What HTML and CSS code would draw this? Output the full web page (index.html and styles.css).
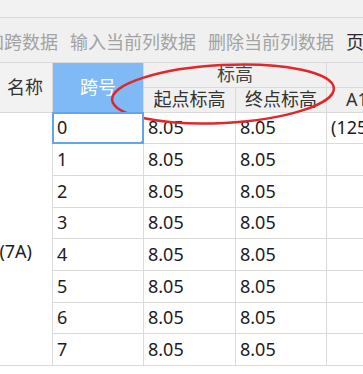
FILE: index.html
```html
<!DOCTYPE html>
<html lang="zh-CN">
<head>
<meta charset="utf-8">
<link rel="stylesheet" href="styles.css">
</head>
<body>
<div class="page">
  <div class="topbar"></div>
  <div class="toolbar">
    <span class="tool first">添加跨数据</span>
    <span class="tool">输入当前列数据</span>
    <span class="tool">删除当前列数据</span>
    <span class="tool dark">页</span>
  </div>
  <div class="grid">
    <div class="hd name">名称</div>
    <div class="hd span-no">跨号</div>
    <div class="hd group">标高</div>
    <div class="hd group-a"></div>
    <div class="hd sub">起点标高</div>
    <div class="hd sub">终点标高</div>
    <div class="hd sub a">A1类</div>

    <div class="namecell">主桥(7A)</div>

    <div class="c sel">0</div><div class="c">8.05</div><div class="c">8.05</div><div class="c">(125.0,30.0)</div>
    <div class="c">1</div><div class="c">8.05</div><div class="c">8.05</div><div class="c"></div>
    <div class="c">2</div><div class="c">8.05</div><div class="c">8.05</div><div class="c"></div>
    <div class="c">3</div><div class="c">8.05</div><div class="c">8.05</div><div class="c"></div>
    <div class="c">4</div><div class="c">8.05</div><div class="c">8.05</div><div class="c"></div>
    <div class="c">5</div><div class="c">8.05</div><div class="c">8.05</div><div class="c"></div>
    <div class="c">6</div><div class="c">8.05</div><div class="c">8.05</div><div class="c"></div>
    <div class="c">7</div><div class="c">8.05</div><div class="c">8.05</div><div class="c"></div>
  </div>
  <svg class="mark" width="363" height="374" viewBox="0 0 363 374">
    <ellipse cx="223" cy="94" rx="111" ry="29" transform="rotate(-3 223 94)" fill="none" stroke="#e2262c" stroke-width="2.5"/>
  </svg>
</div>
</body>
</html>
```

FILE: styles.css
```css
html, body {
  margin: 0;
  padding: 0;
  background: #ffffff;
}
.page {
  position: relative;
  width: 363px;
  height: 374px;
  overflow: hidden;
  font-family: "Noto Sans", "Noto Sans CJK SC", sans-serif;
  font-size: 18px;
  line-height: 1.2;
  color: #1c1c1c;
}
.topbar {
  height: 17px;
  background: #f2f2f2;
  border-bottom: 1px solid #d3d8de;
}
.toolbar {
  height: 44px;
  box-sizing: border-box;
  padding-top: 5px;
  background: #f0f0f0;
  display: flex;
  align-items: center;
  gap: 12px;
  white-space: nowrap;
  color: #a3a3a3;
}
.tool.first {
  margin-left: -32px;
}
.tool.dark {
  color: #2a2a2a;
}
.grid {
  display: grid;
  grid-template-columns: 52px 90px 91px 90px 1fr;
  grid-template-rows: 24px 24px 30px 31px 31px 30px 31px 31px 30px 31px;
  gap: 1px;
  padding: 1px 0;
  background: #dadada;
  white-space: nowrap;
}
.hd {
  background: #f0f0f0;
  display: flex;
  align-items: center;
  justify-content: center;
  color: #333;
  overflow: hidden;
}
.hd.name {
  grid-row: 1 / 3;
  justify-content: flex-end;
  padding-right: 9px;
  background: #f2f2f2;
}
.hd.span-no {
  grid-row: 1 / 3;
  background: #7fb9f6;
  color: #ffffff;
}
.hd.group {
  grid-column: 3 / 5;
  color: #444;
}
.hd.a {
  justify-content: flex-start;
  padding-left: 19px;
}
.namecell {
  grid-column: 1;
  grid-row: 3 / 11;
  background: #ffffff;
  display: flex;
  align-items: flex-start;
  justify-content: flex-end;
  padding-top: 128px;
  padding-right: 20px;
  overflow: hidden;
}
.c {
  background: #ffffff;
  display: flex;
  align-items: center;
  padding-left: 4px;
  overflow: hidden;
}
.sel {
  position: relative;
  outline: 2px solid #62a4ee;
  outline-offset: -1px;
  z-index: 1;
}
.sel::after {
  content: "";
  position: absolute;
  right: -3px;
  bottom: -3px;
  width: 5px;
  height: 5px;
  background: #62a4ee;
}
.mark {
  position: absolute;
  left: 0;
  top: 0;
  pointer-events: none;
}
```
